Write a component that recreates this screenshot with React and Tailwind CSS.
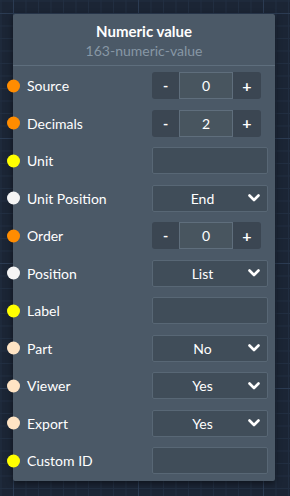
import React from 'react';

const rows = [
    { label: 'Source', dot: 'bg-[#ff8c00]', type: 'stepper', value: '0' },
    { label: 'Decimals', dot: 'bg-[#ff8c00]', type: 'stepper', value: '2' },
    { label: 'Unit', dot: 'bg-[#ffff00]', type: 'input' },
    { label: 'Unit Position', dot: 'bg-[#f5f5f5]', type: 'select', value: 'End' },
    { label: 'Order', dot: 'bg-[#ff8c00]', type: 'stepper', value: '0' },
    { label: 'Position', dot: 'bg-[#f5f5f5]', type: 'select', value: 'List' },
    { label: 'Label', dot: 'bg-[#ffff00]', type: 'input' },
    { label: 'Part', dot: 'bg-[#ffe4c4]', type: 'select', value: 'No' },
    { label: 'Viewer', dot: 'bg-[#ffe4c4]', type: 'select', value: 'Yes' },
    { label: 'Export', dot: 'bg-[#ffe4c4]', type: 'select', value: 'Yes' },
    { label: 'Custom ID', dot: 'bg-[#ffff00]', type: 'input' },
];

const Chevron = () => (
    <svg width="12" height="8" viewBox="0 0 12 8" fill="none">
        <path d="M1.5 1.5 L6 6 L10.5 1.5" stroke="#ffffff" strokeWidth="2.6" strokeLinecap="round" strokeLinejoin="round" />
    </svg>
);

const Stepper = ({ value }) => (
    <div className="flex h-[27px] w-[109px] text-[14px] text-white">
        <div className="w-[27px] flex items-center justify-center bg-[#3b4652] rounded-l-[3px] font-bold">-</div>
        <div className="flex-1 flex items-center justify-center bg-[#48555f] border border-[#5f6e7c]">{value}</div>
        <div className="w-[28px] flex items-center justify-center bg-[#3b4652] rounded-r-[3px] font-bold text-[16px]">+</div>
    </div>
);

const Select = ({ value }) => (
    <div className="flex items-center h-[27px] w-[116px] bg-[#404d59] border-[1.5px] border-[#586775] rounded-[2px] text-[14px] text-white">
        <span className="flex-1 text-center pl-[4px]">{value}</span>
        <span className="pr-[7px] flex items-center"><Chevron /></span>
    </div>
);

const TextBox = () => (
    <div className="h-[27px] w-[116px] bg-[#404d59] border-[1.5px] border-[#586775] rounded-[2px]" />
);

export default function App() {
    return (
        <div
            className="w-[290px] h-[496px] overflow-hidden pl-[13px] pt-[14px] bg-[#1b2535] bg-[linear-gradient(to_right,#2b3b52_1px,transparent_1px),linear-gradient(to_bottom,#2b3b52_1px,transparent_1px),linear-gradient(to_right,#212e41_1px,transparent_1px),linear-gradient(to_bottom,#212e41_1px,transparent_1px)] bg-[size:125px_125px,125px_125px,12.5px_12.5px,12.5px_12.5px] bg-[position:13px_13px,13px_13px,0.5px_0.5px,0.5px_0.5px]"
            style={{ fontFamily: 'Lato, "Open Sans", sans-serif' }}
        >
            <div className="w-[262px] h-[467px] bg-[#4b5967] rounded-[2px] shadow-[0_2px_6px_rgba(0,0,0,0.5)] flex flex-col">
                <div className="h-[52px] flex flex-col items-center pt-[8px] border-b-[1.5px] border-[#5e6e7d]">
                    <div className="text-[15px] font-bold text-white leading-[18px]">Numeric value</div>
                    <div className="text-[14px] text-[#8797a5] leading-[18px] mt-[2px]">163-numeric-value</div>
                </div>
                <div className="flex flex-col pt-[1px]">
                    {rows.map((r) => (
                        <div key={r.label} className="relative h-[37.5px] flex items-center pl-[14px] pr-[7px]">
                            <span className={`absolute left-[-6px] top-1/2 -translate-y-1/2 w-[13px] h-[13px] rounded-full ${r.dot}`} />
                            <span className="flex-1 text-[14px] text-white">{r.label}</span>
                            {r.type === 'stepper' && <div className="w-[116px]"><Stepper value={r.value} /></div>}
                            {r.type === 'select' && <Select value={r.value} />}
                            {r.type === 'input' && <TextBox />}
                        </div>
                    ))}
                </div>
            </div>
        </div>
    );
}
